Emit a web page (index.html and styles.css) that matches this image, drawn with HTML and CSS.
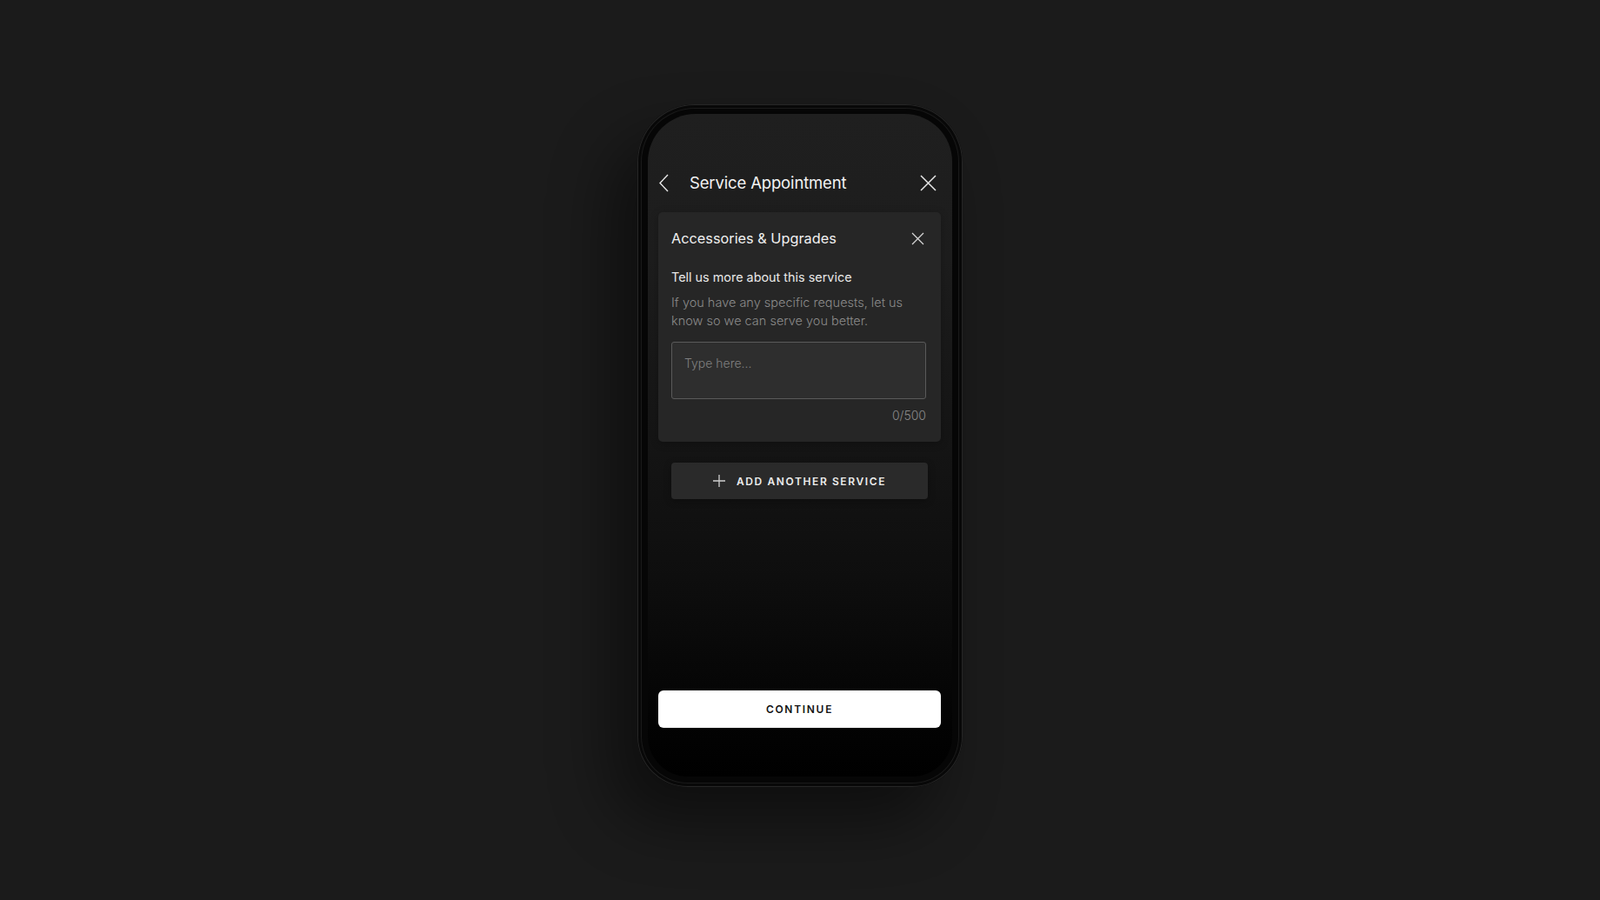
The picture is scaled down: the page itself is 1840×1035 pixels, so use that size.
FILE: index.html
```html
<!DOCTYPE html>
<html>
<head>
    <meta charset="utf-8">
    <title>Service Appointment</title>
    <link rel="stylesheet" href="styles.css">
</head>
<body>
    <div class="phone">
        <div class="screen">
            <div class="topbar">
                <svg class="back" width="11" height="21" viewBox="0 0 11 21">
                    <path d="M10 1 L1 10.5 L10 20" fill="none" stroke="#e8e8e8" stroke-width="1.4"/>
                </svg>
                <span class="title">Service Appointment</span>
                <svg class="close" width="19" height="19" viewBox="0 0 19 19">
                    <path d="M1 1 L18 18 M18 1 L1 18" fill="none" stroke="#e8e8e8" stroke-width="1.5"/>
                </svg>
            </div>

            <div class="card">
                <div class="card-head">
                    <span class="card-title">Accessories &amp; Upgrades</span>
                    <svg class="card-close" width="15" height="15" viewBox="0 0 15 15">
                        <path d="M1 1 L14 14 M14 1 L1 14" fill="none" stroke="#d8d8d8" stroke-width="1.2"/>
                    </svg>
                </div>
                <div class="card-label">Tell us more about this service</div>
                <p class="card-hint">If you have any specific requests, let us know so we can serve you better.</p>
                <textarea class="notes" placeholder="Type here..."></textarea>
                <div class="counter">0/500</div>
            </div>

            <button class="add-button">
                <svg width="14" height="14" viewBox="0 0 14 14">
                    <path d="M7 0 V14 M0 7 H14" fill="none" stroke="#cfcfcf" stroke-width="1.3"/>
                </svg>
                <span>ADD ANOTHER SERVICE</span>
            </button>

            <button class="continue-button">CONTINUE</button>
        </div>
    </div>
</body>
</html>
```

FILE: styles.css
```css
body {
    margin: 0;
    height: 1035px;
    padding-top: 120px;
    box-sizing: border-box;
    background-color: #1b1b1b;
    font-family: 'Inter', 'Liberation Sans', sans-serif;
    color: #ececec;
    overflow: hidden;
}

.phone {
    width: 374px;
    height: 785px;
    margin: 0 auto;
    box-sizing: border-box;
    padding: 11px 12px 12px 12px;
    background-color: #060606;
    border-radius: 66px 66px 58px 58px;
    box-shadow: inset 0 0 0 1px #262626, inset 0 0 0 4px #080808, inset 0 0 0 5px #1a1a1a,
                -30px 40px 70px rgba(0, 0, 0, 0.45);
}

.screen {
    height: 100%;
    display: flex;
    flex-direction: column;
    box-sizing: border-box;
    padding: 0 13px 56px 12px;
    border-radius: 55px 55px 46px 46px;
    background: linear-gradient(#1f1f1f 0%, #1d1d1d 22%, #161616 45%, #0e0e0e 70%, #030303 92%, #000 100%);
    overflow: hidden;
}

.topbar {
    display: flex;
    align-items: center;
    height: 24px;
    margin-top: 67px;
    padding: 0 5px 0 1px;
}

.back {
    flex: none;
}

.title {
    flex: 1;
    margin-left: 24px;
    font-size: 18.5px;
    letter-spacing: -0.15px;
    color: #f2f2f2;
}

.close {
    flex: none;
}

.card {
    margin-top: 22px;
    padding: 18px 19px 20px 15px;
    background-color: #262626;
    border-radius: 5px;
    box-shadow: 0 2px 10px rgba(0, 0, 0, 0.25);
}

.card-head {
    display: flex;
    align-items: center;
    justify-content: space-between;
    height: 24px;
}

.card-title {
    font-size: 16.3px;
    color: #f0f0f0;
}

.card-label {
    margin-top: 23px;
    font-size: 14.4px;
    line-height: 20px;
    color: #e8e8e8;
}

.card-hint {
    margin: 9px 0 0 0;
    padding-right: 10px;
    font-size: 14.5px;
    font-weight: 300;
    line-height: 20.5px;
    color: #8a8a8a;
}

.notes {
    display: block;
    width: calc(100% + 2px);
    height: 66px;
    margin-top: 14px;
    box-sizing: border-box;
    padding: 14px 14px;
    background-color: #2e2e2e;
    border: 1px solid #5a5a5a;
    border-radius: 3px;
    font-family: inherit;
    font-size: 14px;
    font-weight: 300;
    line-height: 20px;
    color: #ddd;
    resize: none;
    outline: none;
}

.notes::placeholder {
    color: #808080;
}

.counter {
    margin-top: 9px;
    margin-right: -2px;
    text-align: right;
    font-size: 14px;
    font-weight: 300;
    line-height: 20px;
    color: #8a8a8a;
}

.add-button {
    display: flex;
    align-items: center;
    justify-content: center;
    gap: 13px;
    height: 42px;
    margin: 24px 15px 0 15px;
    background-color: #2a2a2a;
    border: none;
    border-radius: 4px;
    font-family: inherit;
    font-size: 12px;
    font-weight: 600;
    letter-spacing: 1.6px;
    color: #ededed;
    box-shadow: 0 2px 8px rgba(0, 0, 0, 0.3);
}

.continue-button {
    margin-top: auto;
    height: 43px;
    background-color: #ffffff;
    border: none;
    border-radius: 6px;
    font-family: inherit;
    font-size: 12px;
    font-weight: 600;
    letter-spacing: 1.7px;
    color: #111;
}
```
